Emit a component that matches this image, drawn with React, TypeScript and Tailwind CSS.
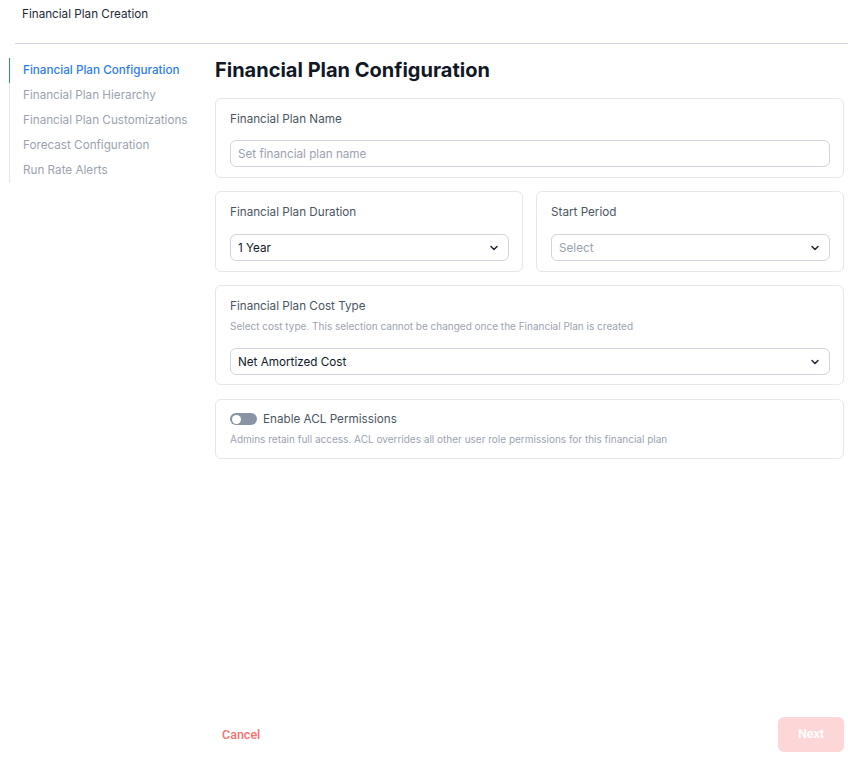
import { useState } from 'react';

const steps = [
  'Financial Plan Configuration',
  'Financial Plan Hierarchy',
  'Financial Plan Customizations',
  'Forecast Configuration',
  'Run Rate Alerts',
];

function Chevron() {
  return (
    <svg className="w-[12px] h-[12px] text-[#1f2937]" fill="none" stroke="currentColor" viewBox="0 0 24 24">
      <path strokeLinecap="round" strokeLinejoin="round" strokeWidth={3} d="M6 9l6 6 6-6" />
    </svg>
  );
}

function SelectBox({ value, placeholder }: { value?: string; placeholder?: string }) {
  return (
    <div className="h-[27px] border border-[#d1d5db] rounded-md flex items-center justify-between pl-[7px] pr-[8px] bg-white">
      <span className={`pt-[2px] text-[11.7px] leading-none ${value ? 'text-[#111827]' : 'text-[#9ca3af]'}`}>
        {value || placeholder}
      </span>
      <Chevron />
    </div>
  );
}

function Card({ children, className = '' }: { children: React.ReactNode; className?: string }) {
  return (
    <div className={`border border-[#e5e7eb] rounded-md pl-[14px] pr-[13px] pt-[10px] bg-white ${className}`}>
      {children}
    </div>
  );
}

export default function App() {
  const [active] = useState(0);
  const [aclEnabled, setAclEnabled] = useState(false);

  return (
    <div className="h-screen flex flex-col bg-white text-[#111827]" style={{ fontFamily: 'Inter, "Noto Sans", sans-serif' }}>
      {/* Header */}
      <div className="ml-[15px] h-[44px] border-b border-[#d1d5db] pl-[7px] pt-[6px] leading-[16px]">
        <span className="block text-[11.7px] leading-[16px] text-[#1f2937]">Financial Plan Creation</span>
      </div>

      <div className="flex flex-1 min-h-0">
        {/* Sidebar */}
        <div className="ml-[9px] w-[206px] shrink-0 pt-[14px]">
          <div className="border-l border-[#e5e7eb]">
            {steps.map((step, i) => (
              <div
                key={step}
                className={`-ml-px pl-[13px] h-[25px] flex items-center text-[11.7px] border-l ${
                  i === active ? 'border-[#2b7de9] text-[#2b7de9] font-medium' : 'border-transparent text-[#9ca3af]'
                }`}
              >
                {step}
              </div>
            ))}
          </div>
        </div>

        {/* Main */}
        <div className="flex-1 flex flex-col pr-[4px] pt-[12px]">
          <h1 className="text-[20px] leading-[28px] font-bold text-[#111827] mb-[14px]">Financial Plan Configuration</h1>

          <div className="flex flex-col">
            <Card className="pb-[10px]">
              <div className="text-[11.7px] leading-[20px] text-[#4b5563]">Financial Plan Name</div>
              <div className="mt-[11px] h-[27px] border border-[#d1d5db] rounded-md flex items-center pl-[7px] pt-[2px]">
                <input
                  placeholder="Set financial plan name"
                  className="w-full outline-none text-[11.7px] placeholder:text-[#9ca3af] bg-transparent"
                />
              </div>
            </Card>

            <div className="grid grid-cols-2 gap-[13px] mt-[13px]">
              <Card className="pb-[10px]">
                <div className="text-[11.7px] leading-[20px] text-[#4b5563]">Financial Plan Duration</div>
                <div className="mt-[12px]">
                  <SelectBox value="1 Year" />
                </div>
              </Card>
              <Card className="pb-[10px]">
                <div className="text-[11.7px] leading-[20px] text-[#4b5563]">Start Period</div>
                <div className="mt-[12px]">
                  <SelectBox placeholder="Select" />
                </div>
              </Card>
            </div>

            <Card className="mt-[13px] pb-[9px]">
              <div className="text-[11.7px] leading-[20px] text-[#4b5563]">Financial Plan Cost Type</div>
              <div className="mt-[2px] text-[10px] leading-[16px] text-[#9ca3af]">
                Select cost type. This selection cannot be changed once the Financial Plan is created
              </div>
              <div className="mt-[14px]">
                <SelectBox value="Net Amortized Cost" />
              </div>
            </Card>

            <Card className="mt-[14px] pb-[11px] !pt-[9px]">
              <div className="flex items-center h-[20px] gap-[6px]">
                <button
                  onClick={() => setAclEnabled(!aclEnabled)}
                  className={`w-[27px] h-[12px] rounded-full flex items-center px-[1.5px] ${
                    aclEnabled ? 'bg-[#2b7de9] justify-end' : 'bg-[#8b94a5] justify-start'
                  }`}
                >
                  <span className="w-[9px] h-[9px] rounded-full bg-white" />
                </button>
                <span className="pt-px text-[11.7px] text-[#4b5563]">Enable ACL Permissions</span>
              </div>
              <div className="mt-[2px] text-[10px] leading-[16px] text-[#9ca3af]">
                Admins retain full access. ACL overrides all other user role permissions for this financial plan
              </div>
            </Card>
          </div>

          {/* Footer */}
          <div className="mt-auto mb-[6px] flex items-center justify-between">
            <button className="px-[7px] pt-[2px] text-[12.5px] font-medium text-[#f87171]" style={{ fontFamily: 'Roboto, Inter, sans-serif' }}>
              Cancel
            </button>
            <button
              disabled
              className="w-[66px] h-[35px] rounded-md bg-[#fdd7d7] text-white text-[12.5px] font-semibold"
              style={{ fontFamily: 'Roboto, Inter, sans-serif' }}
            >
              Next
            </button>
          </div>
        </div>
      </div>
    </div>
  );
}
